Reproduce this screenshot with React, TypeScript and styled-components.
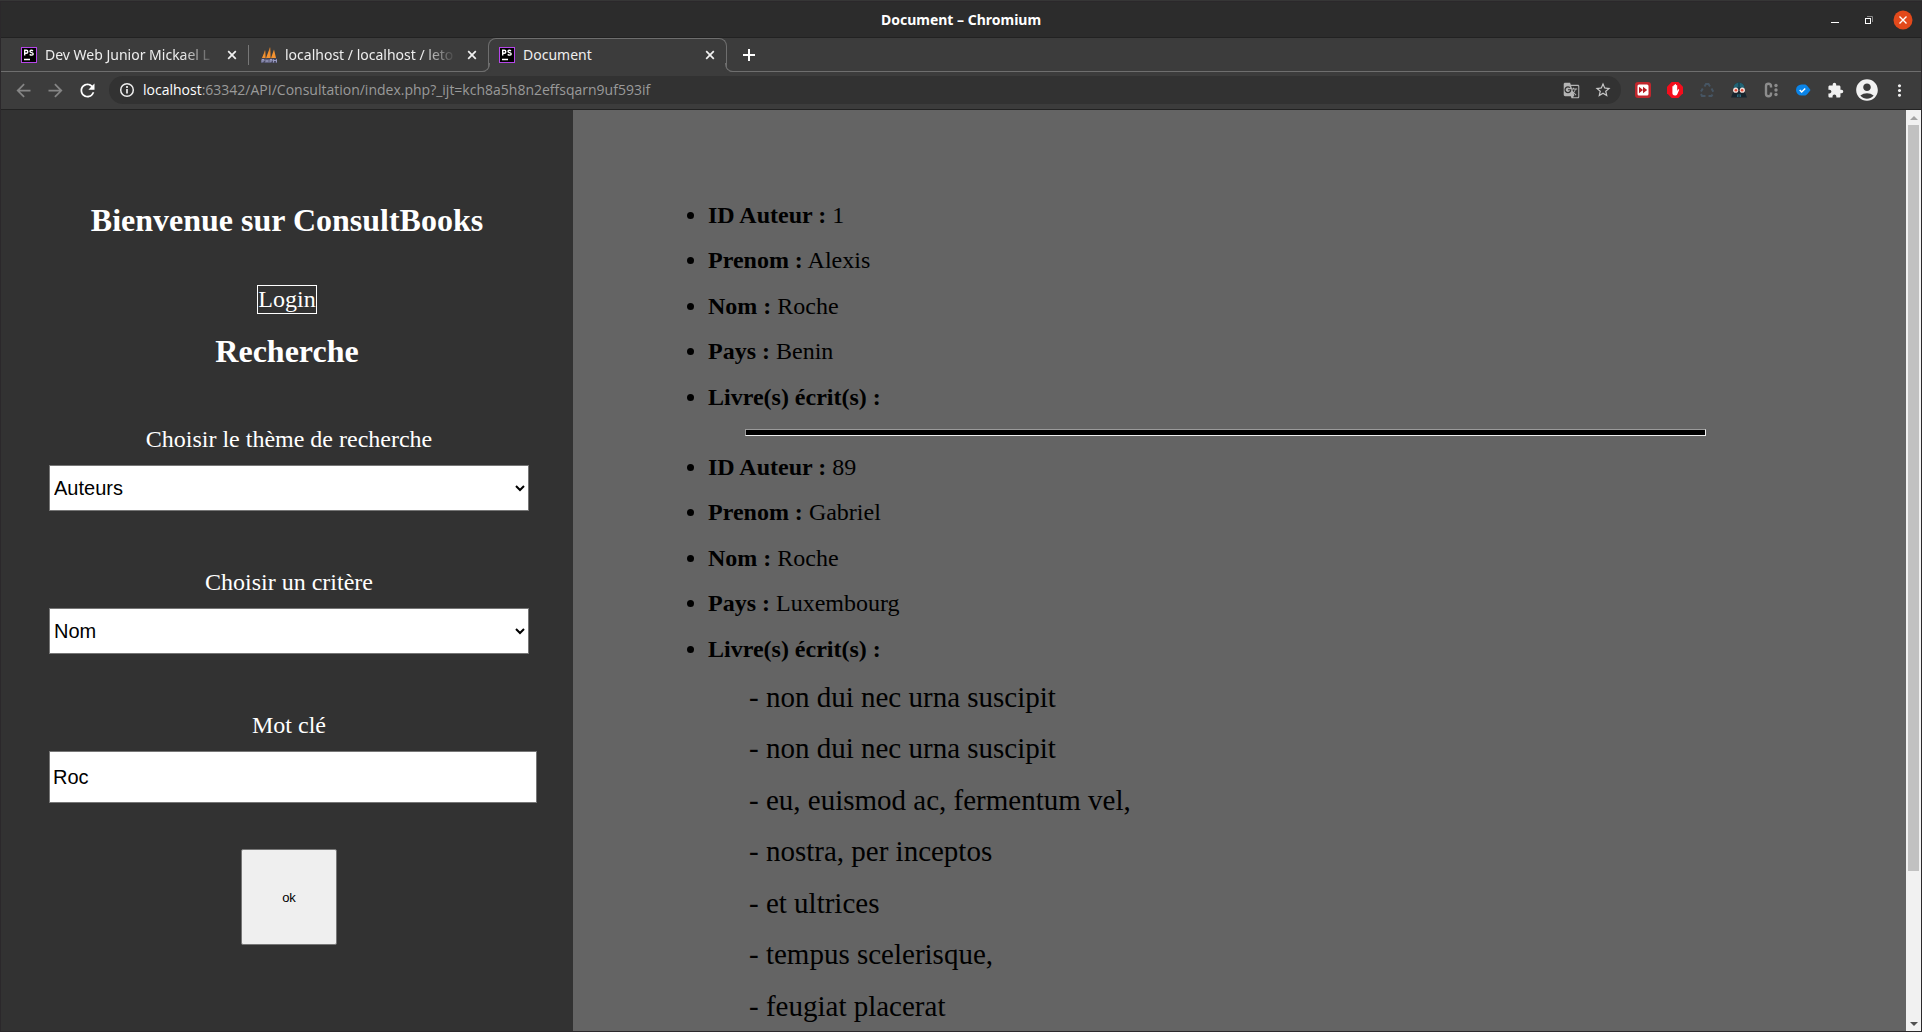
import React from "react";
import styled, { createGlobalStyle, css } from "styled-components";
import {
  MdAccountCircle,
  MdArrowBack,
  MdArrowForward,
  MdExtension,
  MdGTranslate,
  MdMoreVert,
  MdRefresh,
  MdStarBorder,
} from "react-icons/md";

const Global = createGlobalStyle`
  * { box-sizing: border-box; }
  html, body { margin: 0; height: 100%; background: #2e2e2e; }
  #root { height: 100%; }
`;

const UI = `"Open Sans", "Noto Sans", sans-serif`;
const TAB_UI = `"Noto Sans", "Open Sans", sans-serif`;
const SERIF = `"Liberation Serif", "Times New Roman", serif`;
const SANS = `"Liberation Sans", Arial, sans-serif`;

const Window = styled.div`
  display: flex;
  flex-direction: column;
  height: 100vh;
  overflow: hidden;
  padding: 1px;
  background: #2b282b;
  border-top: 1px solid #363636;
  font-family: ${TAB_UI};
  color: #fff;
`;

const IconButton = styled.button<{ $size?: number; $color?: string }>`
  display: flex;
  align-items: center;
  justify-content: center;
  flex: none;
  width: ${(p) => p.$size ?? 20}px;
  height: ${(p) => p.$size ?? 20}px;
  padding: 0;
  border: 0;
  background: none;
  color: ${(p) => p.$color ?? "#f1f1f1"};
  svg { flex: none; }
`;

const TitleBar = styled.header`
  display: grid;
  grid-template-columns: 1fr auto 1fr;
  align-items: center;
  flex: none;
  height: 36px;
  padding: 0 8px;
  background: #2c2c2c;
  border-bottom: 1px solid #222;
`;

const WindowTitle = styled.div`
  grid-column: 2;
  font-size: 14px;
  line-height: 20px;
  font-weight: 700;
`;

const WindowControls = styled.div`
  display: flex;
  justify-content: flex-end;
  align-items: center;
  gap: 14px;
`;

const TabStrip = styled.nav`
  display: flex;
  flex: none;
  height: 34px;
  background: #3c3c3c;
`;

const Tab = styled.div<{ $active?: boolean }>`
  display: flex;
  align-items: center;
  flex: none;
  gap: 8px;
  width: 239px;
  padding: 0 8px 0 12px;
  border-bottom: 1px solid #6e6e6e;
  ${(p) =>
    p.$active &&
    css`
      position: relative;
      padding: 0 8px 1px 10px;
      border: 1px solid #6e6e6e;
      border-bottom: 0;
      border-radius: 8px 8px 0 0;
      &::before,
      &::after {
        content: "";
        position: absolute;
        bottom: 0;
        width: 8px;
        height: 8px;
        border: 0 solid #6e6e6e;
        border-bottom-width: 1px;
      }
      &::before {
        left: -8px;
        border-right-width: 1px;
        border-bottom-right-radius: 8px;
        box-shadow: 2px 2px 0 #3c3c3c;
      }
      &::after {
        right: -8px;
        border-left-width: 1px;
        border-bottom-left-radius: 8px;
        box-shadow: -2px 2px 0 #3c3c3c;
      }
    `}
`;

const TabLead = styled.div`
  flex: none;
  width: 8px;
  border-bottom: 1px solid #6e6e6e;
`;

const TabDivider = styled.div`
  display: flex;
  align-items: center;
  flex: none;
  border-bottom: 1px solid #6e6e6e;
  &::before {
    content: "";
    width: 1px;
    height: 20px;
    background: #777;
  }
`;

const TabTitle = styled.span<{ $fade?: boolean }>`
  flex: 1;
  min-width: 0;
  overflow: hidden;
  white-space: nowrap;
  font-size: 14px;
  line-height: 20px;
  color: #eee;
  ${(p) =>
    p.$fade &&
    css`
      mask-image: linear-gradient(to right, #000 80%, transparent);
    `}
`;

const TabRest = styled.div`
  display: flex;
  align-items: center;
  flex: 1;
  padding-left: 12px;
  border-bottom: 1px solid #6e6e6e;
`;

const Toolbar = styled.div`
  display: flex;
  align-items: center;
  flex: none;
  height: 38px;
  padding: 0 12px 1px;
  background: #3c3c3c;
  border-bottom: 1px solid #222;
`;

const NavButtons = styled.div`
  display: flex;
  gap: 12px;
  padding-right: 12px;
`;

const AddressBar = styled.div`
  display: flex;
  align-items: center;
  flex: 1;
  gap: 8px;
  height: 28px;
  padding: 0 8px 0 10px;
  border-radius: 14px;
  background: #323232;
`;

const Url = styled.div`
  flex: 1;
  font-family: ${UI};
  font-size: 14px;
  line-height: 20px;
  color: #9a9a9a;
  b { font-weight: 400; color: #fff; }
`;

const ActionGroup = styled.div`
  display: flex;
  align-items: center;
  gap: 12px;
`;

const Extensions = styled(ActionGroup)`
  padding-left: 12px;
`;

const Page = styled.div`
  display: flex;
  flex: 1;
  min-height: 0;
  container-type: size;
  font-family: ${SERIF};
  font-size: 24px;
  line-height: 27px;
`;

const Sidebar = styled.aside`
  display: flex;
  flex-direction: column;
  align-items: center;
  flex: none;
  width: 572px;
  padding-top: 92px;
  background: #323232;
  color: #fff;
`;

const Heading = styled.h1`
  margin: 0;
  font-size: 32px;
  line-height: 36px;
  font-weight: 700;
`;

const Login = styled.a`
  margin: 47px 0 19px;
  border: 1px solid #fff;
  color: #fff;
  text-decoration: none;
`;

const Form = styled.form`
  display: flex;
  flex-direction: column;
  width: 480px;
  padding-top: 57px;
  margin-left: 4px;
`;

const Field = styled.div<{ $last?: boolean }>`
  display: flex;
  flex-direction: column;
  margin-bottom: ${(p) => (p.$last ? 46 : 58)}px;
`;

const Label = styled.label`
  margin-bottom: 12px;
  text-align: center;
`;

const Select = styled.select`
  height: 46px;
  border: 1px solid #767676;
  border-radius: 0;
  background: #fff;
  color: #000;
  font: 20px ${SANS};
`;

const TextInput = styled.input`
  width: 488px;
  height: 52px;
  padding: 1px 3px;
  border: 1px solid #767676;
  background: #fff;
  color: #000;
  font: 20px ${SANS};
`;

const Submit = styled.button`
  align-self: center;
  width: 96px;
  height: 96px;
  border: 1px solid #767676;
  border-radius: 2px;
  background: #efefef;
  color: #000;
  font: 13px ${SANS};
`;

const Results = styled.main`
  flex: 1;
  min-width: 0;
  overflow: hidden;
  padding: 92px 163px 0 96px;
  background: #646464;
  color: #000;
`;

const AuthorList = styled.ul`
  margin: 0;
  padding-left: 39px;
`;

const Item = styled.li`
  margin-bottom: 2cqh;
`;

const Book = styled.p`
  margin: 0 0 2cqh;
  padding-left: 41px;
  font-size: 29px;
  line-height: 33px;
`;

const Separator = styled.hr`
  width: 50vw;
  height: 7px;
  margin: 0 auto 18px;
  border: 1px inset #eee;
  background: #000;
`;

const ScrollTrack = styled.div`
  display: flex;
  flex-direction: column;
  align-items: center;
  flex: none;
  width: 15px;
  background: #f1f1f1;
`;

const ScrollArrow = styled.button`
  display: flex;
  align-items: center;
  justify-content: center;
  width: 15px;
  height: 15px;
  padding: 0;
  border: 0;
  background: none;
`;

const ScrollThumb = styled.div`
  width: 11px;
  height: 81%;
  margin-bottom: auto;
  background: #c1c1c1;
`;

const PhpStormIcon = () => (
  <svg width="16" height="16" viewBox="0 0 16 16" aria-hidden="true">
    <rect x=".5" y=".5" width="15" height="15" fill="#000" stroke="#b646ea" />
    <path
      d="M3.700 8.500V3.200h1.600a1.500 1.500 0 0 1 0 3H3.700M12 3.900C11 3 9 3 9 4.400c0 1.500 3.200.9 3.200 2.500 0 1.500-2.200 1.600-3.500.5M3 12.500h6"
      fill="none"
      stroke="#fff"
      strokeWidth="1.400"
    />
  </svg>
);

const SailIcon = () => (
  <svg width="16" height="16" viewBox="0 0 16 16" aria-hidden="true">
    <path d="M1 11 4 3.500 4.500 11zM5 11 9 .5 9.500 11zM10 11l3-8.500 2 8.500z" fill="#f59331" />
    <path d="M4 3.500 4.500 11H6M9 .5 9.500 11H11" fill="none" stroke="#b96f2b" strokeWidth=".7" />
    <path d="M0 11.500h16V16H0z" fill="#4a4a62" />
    <path d="M1 15.500v-3h2v1.500H1M5 15.500v-3m0 1.500h2m0-1.500v3M9 15.500v-3h2v1.500H9M12.500 15.500v-3L14 14l1.500-1.500v3" fill="none" stroke="#a3a5cc" strokeWidth=".9" />
  </svg>
);

const Close = () => (
  <svg width="10" height="10" viewBox="0 0 10 10" aria-hidden="true">
    <path d="m1.200 1.200 7.600 7.600m0-7.600L1.200 8.800" stroke="currentColor" strokeWidth="1.700" />
  </svg>
);

const FastForwardIcon = () => (
  <svg width="16" height="16" viewBox="0 0 16 16" aria-hidden="true">
    <rect width="16" height="16" rx="3" fill="#c0272d" />
    <rect x="2.500" y="2.500" width="11" height="11" rx="1.500" fill="#fff" />
    <path d="M4 4.800 8 8l-4 3.200zM8 4.800 12.200 8 8 11.200z" fill="#b71c22" />
  </svg>
);

const BlockerIcon = () => (
  <svg width="16" height="16" viewBox="0 0 16 16" aria-hidden="true">
    <path d="M4.700 0h6.600L16 4.700v6.600L11.300 16H4.700L0 11.300V4.700z" fill="#f40d1c" />
    <path
      d="M5.400 9V4.600a.6.6 0 0 1 1.200 0V3.300a.6.6 0 0 1 1.200 0V2.700a.6.600 0 0 1 1.200 0v.9a.6.600 0 0 1 1.200 0V9l.8-1.500c.5-.7 1.400-.3 1.100.4l-1.700 4.100c-.5 1.100-1.300 1.500-2.500 1.500-1.700 0-2.500-1-2.500-2.500z"
      fill="#fff"
    />
  </svg>
);

const RecycleIcon = () => (
  <svg width="16" height="16" viewBox="0 0 16 16" fill="none" stroke="#465563" strokeWidth="2" aria-hidden="true">
    <path d="M5.500 4.500 7 2h2.500l1.500 2.500M12.500 6.500l1.800 3.200M13.500 12.500 12.500 14H9.500M6.500 14H3l-1-2M2 9.500l1.800-3" />
  </svg>
);

const MaskIcon = () => (
  <svg width="16" height="16" viewBox="0 0 16 16" aria-hidden="true">
    <path d="M0 15.500 2.500 9V6a5.500 5.500 0 0 1 11 0v3l2.500 6.500z" fill="#17252e" />
    <path d="M2.500 7V6a5.500 5.500 0 0 1 11 0v1L9 5.500H7z" fill="#226374" />
    <path d="M7.300.5h1.400V7H7.300z" fill="#17404d" />
    <circle cx="4.700" cy="8.200" r="2.600" fill="#f4ded8" />
    <circle cx="11.300" cy="8.200" r="2.600" fill="#f4ded8" />
    <circle cx="4.900" cy="8.200" r="1.300" fill="#e34835" />
    <circle cx="11.100" cy="8.200" r="1.300" fill="#e34835" />
    <path d="M6.500 12.500v2.500M8 12v3M9.500 12.500v2.500" stroke="#2e7285" strokeWidth=".9" />
  </svg>
);

const CodeIcon = () => (
  <svg width="16" height="16" viewBox="0 0 16 16" aria-hidden="true">
    <path d="M8 5.500V4Q8 1.800 5.500 1.800T3 4v8q0 2.200 2.500 2.200T8 12v-1.500" fill="none" stroke="#8c8c8c" strokeWidth="2.400" />
    <g fill="#8c8c8c">
      <circle cx="13" cy="3.500" r="1.700" />
      <circle cx="13" cy="8" r="1.700" />
      <circle cx="13" cy="12.500" r="1.700" />
    </g>
  </svg>
);

const CheckTagIcon = () => (
  <svg width="16" height="16" viewBox="0 0 16 16" aria-hidden="true">
    <path d="M6.500 2.500h3c2 0 3 1.500 6 5.500-3 4-4 5.500-6 5.500h-3a5.500 5.500 0 0 1 0-11z" fill="#0a84e8" />
    <path d="m4.700 8 2 2 3.500-3.600" fill="none" stroke="#fff" strokeWidth="1.500" />
  </svg>
);

const authors = [
  { id: "1", prenom: "Alexis", nom: "Roche", pays: "Benin", books: [] as string[] },
  {
    id: "89",
    prenom: "Gabriel",
    nom: "Roche",
    pays: "Luxembourg",
    books: [
      "non dui nec urna suscipit",
      "non dui nec urna suscipit",
      "eu, euismod ac, fermentum vel,",
      "nostra, per inceptos",
      "et ultrices",
      "tempus scelerisque,",
      "feugiat placerat",
    ],
  },
];

export default function App() {
  return (
    <Window>
      <Global />
      <TitleBar>
        <WindowTitle>Document – Chromium</WindowTitle>
        <WindowControls>
          <IconButton aria-label="Minimize">
            <svg width="20" height="20"><path d="M6 12.500h8" stroke="#fff" /></svg>
          </IconButton>
          <IconButton aria-label="Restore">
            <svg width="20" height="20" fill="none">
              <path d="M8 6.500h5.500V12" stroke="#888" />
              <rect x="6.500" y="8.500" width="5" height="5" stroke="#fff" />
            </svg>
          </IconButton>
          <IconButton aria-label="Close">
            <svg width="20" height="20">
              <circle cx="10" cy="10" r="9.500" fill="#e2491b" />
              <path d="m6.500 6.500 7 7m0-7-7 7" stroke="#fff" strokeWidth="1.400" />
            </svg>
          </IconButton>
        </WindowControls>
      </TitleBar>

      <TabStrip>
        <TabLead />
        <Tab>
          <PhpStormIcon />
          <TabTitle $fade>Dev Web Junior Mickael L</TabTitle>
          <IconButton aria-label="Close tab" $size={16}><Close /></IconButton>
        </Tab>
        <TabDivider />
        <Tab>
          <SailIcon />
          <TabTitle $fade>localhost / localhost / leto</TabTitle>
          <IconButton aria-label="Close tab" $size={16}><Close /></IconButton>
        </Tab>
        <Tab $active>
          <PhpStormIcon />
          <TabTitle>Document</TabTitle>
          <IconButton aria-label="Close tab" $size={16}><Close /></IconButton>
        </Tab>
        <TabRest>
          <IconButton aria-label="New tab">
            <svg width="20" height="20"><path d="M10 4v12M4 10h12" stroke="#fff" strokeWidth="2" /></svg>
          </IconButton>
        </TabRest>
      </TabStrip>

      <Toolbar>
        <NavButtons>
          <IconButton aria-label="Back" $color="#858585"><MdArrowBack size={21} /></IconButton>
          <IconButton aria-label="Forward" $color="#858585"><MdArrowForward size={21} /></IconButton>
          <IconButton aria-label="Reload" $color="#fff"><MdRefresh size={21} /></IconButton>
        </NavButtons>
        <AddressBar>
          <svg width="16" height="16" aria-hidden="true">
            <circle cx="8" cy="8" r="6.300" fill="none" stroke="#eee" strokeWidth="1.500" />
            <path d="M8 7v4.500M8 4v2" stroke="#eee" strokeWidth="1.700" />
          </svg>
          <Url><b>localhost</b>:63342/API/Consultation/index.php?_ijt=kch8a5h8n2effsqarn9uf593if</Url>
          <ActionGroup>
            <IconButton aria-label="Translate this page" $color="#b5b5b5"><MdGTranslate size={17} /></IconButton>
            <IconButton aria-label="Bookmark this page" $color="#c8c8c8"><MdStarBorder size={18} /></IconButton>
          </ActionGroup>
        </AddressBar>
        <Extensions>
          <IconButton aria-label="Fast forward"><FastForwardIcon /></IconButton>
          <IconButton aria-label="Ad blocker"><BlockerIcon /></IconButton>
          <IconButton aria-label="Recycle"><RecycleIcon /></IconButton>
          <IconButton aria-label="Mask"><MaskIcon /></IconButton>
          <IconButton aria-label="Code"><CodeIcon /></IconButton>
          <IconButton aria-label="Verified"><CheckTagIcon /></IconButton>
          <IconButton aria-label="Extensions"><MdExtension size={17} /></IconButton>
          <IconButton aria-label="Profile"><MdAccountCircle size={26} /></IconButton>
          <IconButton aria-label="Menu"><MdMoreVert size={19} /></IconButton>
        </Extensions>
      </Toolbar>

      <Page>
        <Sidebar>
          <Heading>Bienvenue sur ConsultBooks</Heading>
          <Login href="#login">Login</Login>
          <Heading as="h2">Recherche</Heading>
          <Form onSubmit={(e) => e.preventDefault()}>
            <Field>
              <Label htmlFor="theme">Choisir le thème de recherche</Label>
              <Select id="theme"><option>Auteurs</option></Select>
            </Field>
            <Field>
              <Label htmlFor="critere">Choisir un critère</Label>
              <Select id="critere"><option>Nom</option></Select>
            </Field>
            <Field $last>
              <Label htmlFor="mot">Mot clé</Label>
              <TextInput id="mot" defaultValue="Roc" />
            </Field>
            <Submit>ok</Submit>
          </Form>
        </Sidebar>
        <Results>
          {authors.map((a, i) => (
            <React.Fragment key={a.id}>
              <AuthorList>
                <Item><b>ID Auteur :</b> {a.id}</Item>
                <Item><b>Prenom :</b> {a.prenom}</Item>
                <Item><b>Nom :</b> {a.nom}</Item>
                <Item><b>Pays :</b> {a.pays}</Item>
                <Item><b>Livre(s) écrit(s) :</b></Item>
                {a.books.map((b, n) => <Book key={n}>- {b}</Book>)}
              </AuthorList>
              {i < authors.length - 1 && <AuthorList as="div"><Separator /></AuthorList>}
            </React.Fragment>
          ))}
        </Results>
        <ScrollTrack>
          <ScrollArrow aria-label="Scroll up"><svg width="8" height="4"><path d="M0 4h8L4 0z" fill="#a3a3a3" /></svg></ScrollArrow>
          <ScrollThumb />
          <ScrollArrow aria-label="Scroll down"><svg width="8" height="4"><path d="M0 0h8L4 4z" fill="#505050" /></svg></ScrollArrow>
        </ScrollTrack>
      </Page>
    </Window>
  );
}
